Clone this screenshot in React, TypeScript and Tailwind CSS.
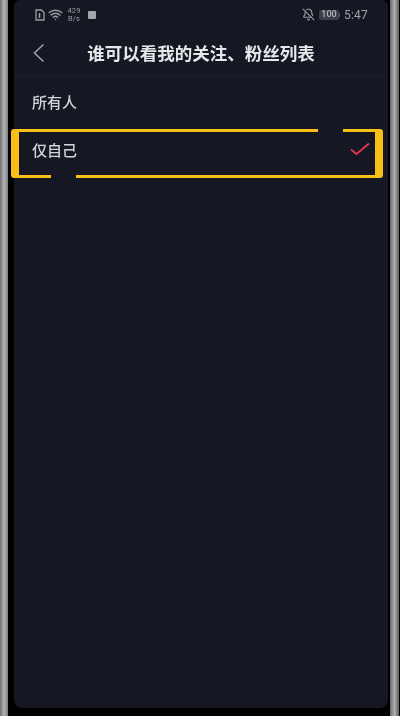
import { BellOff, Wifi } from "lucide-react"

const cjk = "font-['Noto_Sans_CJK_SC','Noto_Sans',sans-serif]"

function StatusBar() {
  return (
    <div className="flex h-[29px] shrink-0 items-center justify-between pl-[21px] pr-[20px] font-['Roboto',sans-serif] text-[#9a9da3] blur-[0.4px]">
      <div className="flex items-center">
        <svg width="10" height="12" viewBox="0 0 10 12" fill="none" stroke="currentColor" strokeWidth="1.3">
          <path d="M1 1h5.5L9 3.5V11H1z" />
          <path d="M4.5 4v5" strokeWidth="1.5" />
        </svg>
        <Wifi className="ml-[3px]" size={15} strokeWidth={2.4} />
        <div className="ml-[4px] flex w-[14px] flex-col items-center text-[7.5px] leading-[8px] tracking-[0.2px]">
          <span>429</span>
          <span>B/s</span>
        </div>
        <div className="ml-[7px] h-[8px] w-[8px] rounded-[1px] bg-[#a3a5aa]" />
      </div>
      <div className="flex items-center">
        <BellOff size={13} strokeWidth={2} />
        <div className="relative ml-[4px] flex h-[10px] w-[20px] items-center justify-center rounded-[2px] bg-[#3c404b] text-[9px] font-medium leading-none text-[#b4b6ba]">
          100
          <span className="absolute right-[-1px] top-[3px] h-[4px] w-[1px] bg-[#5b5e68]" />
        </div>
        <span className="ml-[5px] text-[12px] tracking-[0.2px] text-[#a0a3a8]">5:47</span>
      </div>
    </div>
  )
}

function Header() {
  return (
    <div className="relative flex h-[48px] shrink-0 items-center justify-center border-b border-[#1e212b]">
      <svg className="absolute left-[18px] top-[14px]" width="14" height="20" viewBox="0 0 14 20" fill="none" stroke="#9a9da3" strokeWidth="1.6">
        <path d="M11.5 1.5 2.5 10l9 8.5" />
      </svg>
      <h1 className={`${cjk} text-[17.5px] font-bold leading-none text-[#e6e7e8] blur-[0.4px]`}>
        谁可以看我的关注、粉丝列表
      </h1>
    </div>
  )
}

function Option({ label, checked }: { label: string; checked?: boolean }) {
  return (
    <div className="flex h-[48px] items-center justify-between pl-[18px] pr-[18px]">
      <span className={`${cjk} text-[15px] font-medium leading-none text-[#d3d4d6] blur-[0.4px]`}>{label}</span>
      {checked && (
        <svg width="20" height="14" viewBox="0 0 20 14" fill="none" stroke="#e0344f" strokeWidth="2">
          <path d="M1 7.5 6.5 12 19 1.5" />
        </svg>
      )}
    </div>
  )
}

function Highlight() {
  return (
    <div className="absolute left-[-3px] top-[52px] h-[49px] w-[372px]">
      <div className="absolute bottom-0 left-0 top-0 w-[8px] rounded-l-[3px] bg-[#f8bf14]" />
      <div className="absolute bottom-0 right-0 top-0 w-[8px] rounded-r-[3px] bg-[#f8bf14]" />
      <div className="absolute left-[3px] top-0 h-[3px] w-[304px] bg-[#f8bf14]" />
      <div className="absolute right-[3px] top-0 h-[3px] w-[37px] bg-[#f8bf14]" />
      <div className="absolute bottom-0 left-[3px] h-[3px] w-[37px] bg-[#f8bf14]" />
      <div className="absolute bottom-0 right-[3px] h-[3px] w-[304px] bg-[#f8bf14]" />
    </div>
  )
}

export default function App() {
  return (
    <div className="flex h-[716px] w-[400px] overflow-hidden bg-black">
      <div className="h-full w-[8px] shrink-0 bg-gradient-to-r from-[#6f6f6f] via-[#b5b5b5] to-[#7d7d7d]" />
      <div className="w-[6px] shrink-0" />
      <main className="flex h-[708px] w-[374px] shrink-0 flex-col rounded-b-[8px] rounded-t-[6px] bg-[#151823]">
        <StatusBar />
        <Header />
        <div className="relative">
          <Option label="所有人" />
          <Option label="仅自己" checked />
          <Highlight />
        </div>
      </main>
      <div className="w-[2px] shrink-0" />
      <div className="h-full w-[9px] shrink-0 bg-gradient-to-r from-[#6a6a6a] via-[#b0b0b0] to-[#5d5d5d]" />
    </div>
  )
}
